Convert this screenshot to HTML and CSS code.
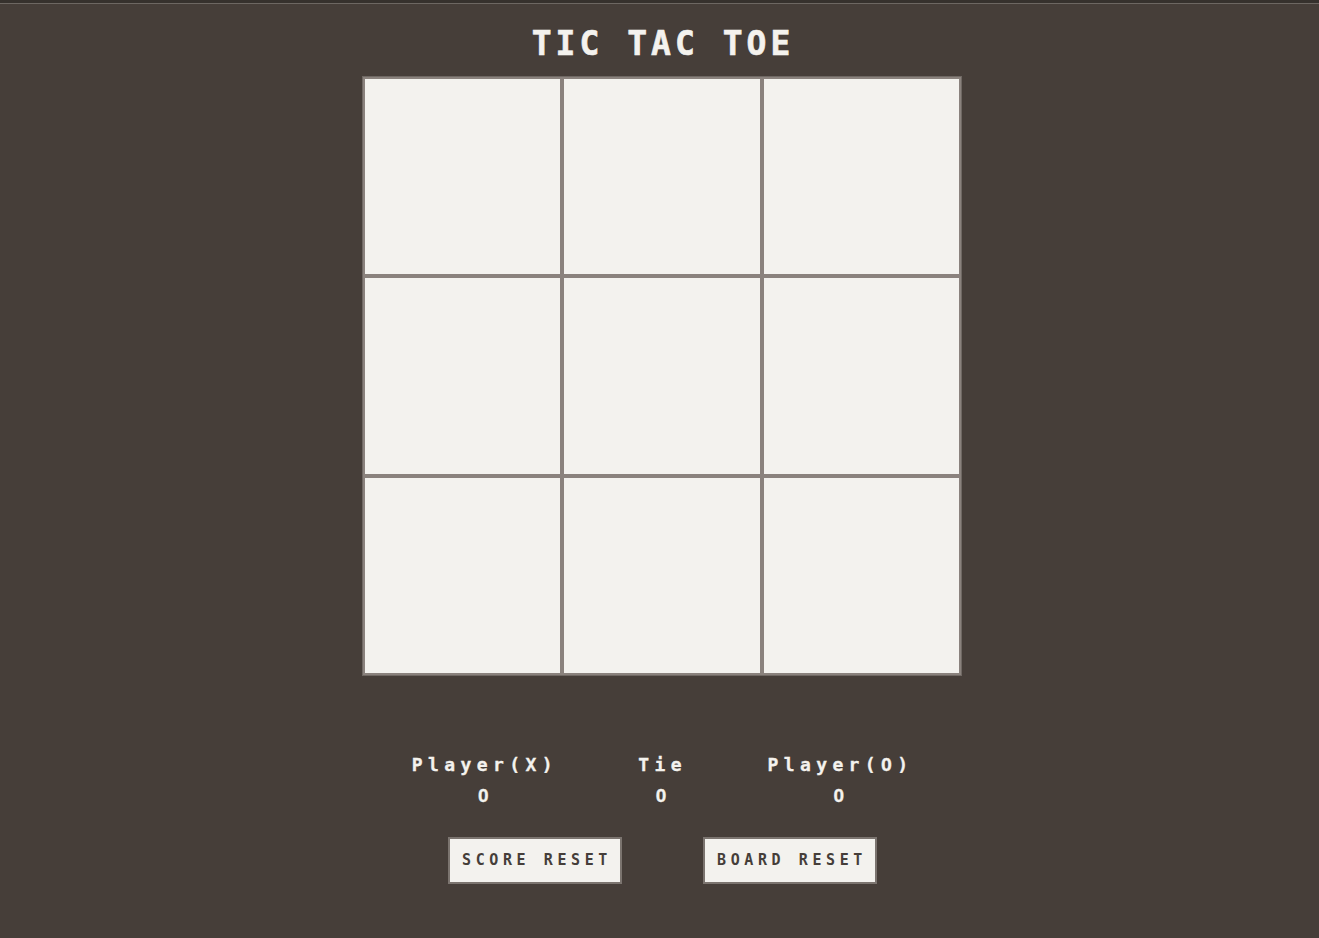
FILE: index.html
```html
<!DOCTYPE html>
<html lang="en">
<head>
<meta charset="utf-8">
<title>Tic Tac Toe</title>
<link rel="stylesheet" href="styles.css">
</head>
<body>
<main class="game">
  <h1 class="title">TIC TAC TOE</h1>
  <div class="board">
    <div class="cell"></div><div class="cell"></div><div class="cell"></div>
    <div class="cell"></div><div class="cell"></div><div class="cell"></div>
    <div class="cell"></div><div class="cell"></div><div class="cell"></div>
  </div>
  <div class="scores">
    <div class="score"><span class="label">Player(X)</span><span class="value">0</span></div>
    <div class="score"><span class="label">Tie</span><span class="value">0</span></div>
    <div class="score"><span class="label">Player(O)</span><span class="value">0</span></div>
  </div>
  <div class="actions">
    <button class="btn">SCORE RESET</button>
    <button class="btn">BOARD RESET</button>
  </div>
</main>
</body>
</html>
```
FILE: styles.css
```css
html {
  background: #463e39;
  border-top: 3px solid #36312d;
  height: 100%;
  box-sizing: border-box;
}
body {
  margin: 0;
  border-top: 1px solid #6d6762;
  padding-left: 5px;
  font-family: "DejaVu Sans Mono", "Liberation Mono", monospace;
  font-weight: bold;
  color: #f4f2ee;
}
.game {
  display: flex;
  flex-direction: column;
  align-items: center;
}
.title {
  margin: 20px 0 12px;
  font-size: 33px;
  line-height: 40px;
  letter-spacing: 4px;
  padding-left: 2px;
  font-weight: bold;
  -webkit-text-stroke: 0.6px #f4f2ee;
}
.board {
  width: 600px;
  height: 600px;
  box-sizing: border-box;
  border: 1px solid #6f6863;
  display: grid;
  grid-template-columns: repeat(3, 1fr);
  grid-template-rows: repeat(3, 1fr);
}
.cell {
  background: #f3f2ee;
  border: 2px solid #8a827d;
}
.scores {
  display: flex;
  gap: 75px;
  margin-top: 77px;
  padding-right: 4px;
}
.score {
  display: flex;
  flex-direction: column;
  align-items: center;
  gap: 7px;
  font-size: 18px;
  line-height: 24px;
  letter-spacing: 5.4px;
  -webkit-text-stroke: 0.3px #f4f2ee;
}
.label {
  padding-left: 5.4px;
}
.value {
  font-family: "Liberation Sans", "DejaVu Sans", sans-serif;
  font-size: 19px;
  letter-spacing: 0;
  padding-left: 2px;
}
.actions {
  display: flex;
  gap: 81px;
  margin-top: 29px;
}
.btn {
  width: 174px;
  box-sizing: border-box;
  padding: 12px 0 12px 5px;
  border: 2px solid #7b746f;
  background: #f3f2ee;
  color: #453e39;
  font-family: "DejaVu Sans Mono", "Liberation Mono", monospace;
  font-weight: bold;
  font-size: 15px;
  line-height: 19px;
  letter-spacing: 4.6px;
  text-align: center;
}
```
